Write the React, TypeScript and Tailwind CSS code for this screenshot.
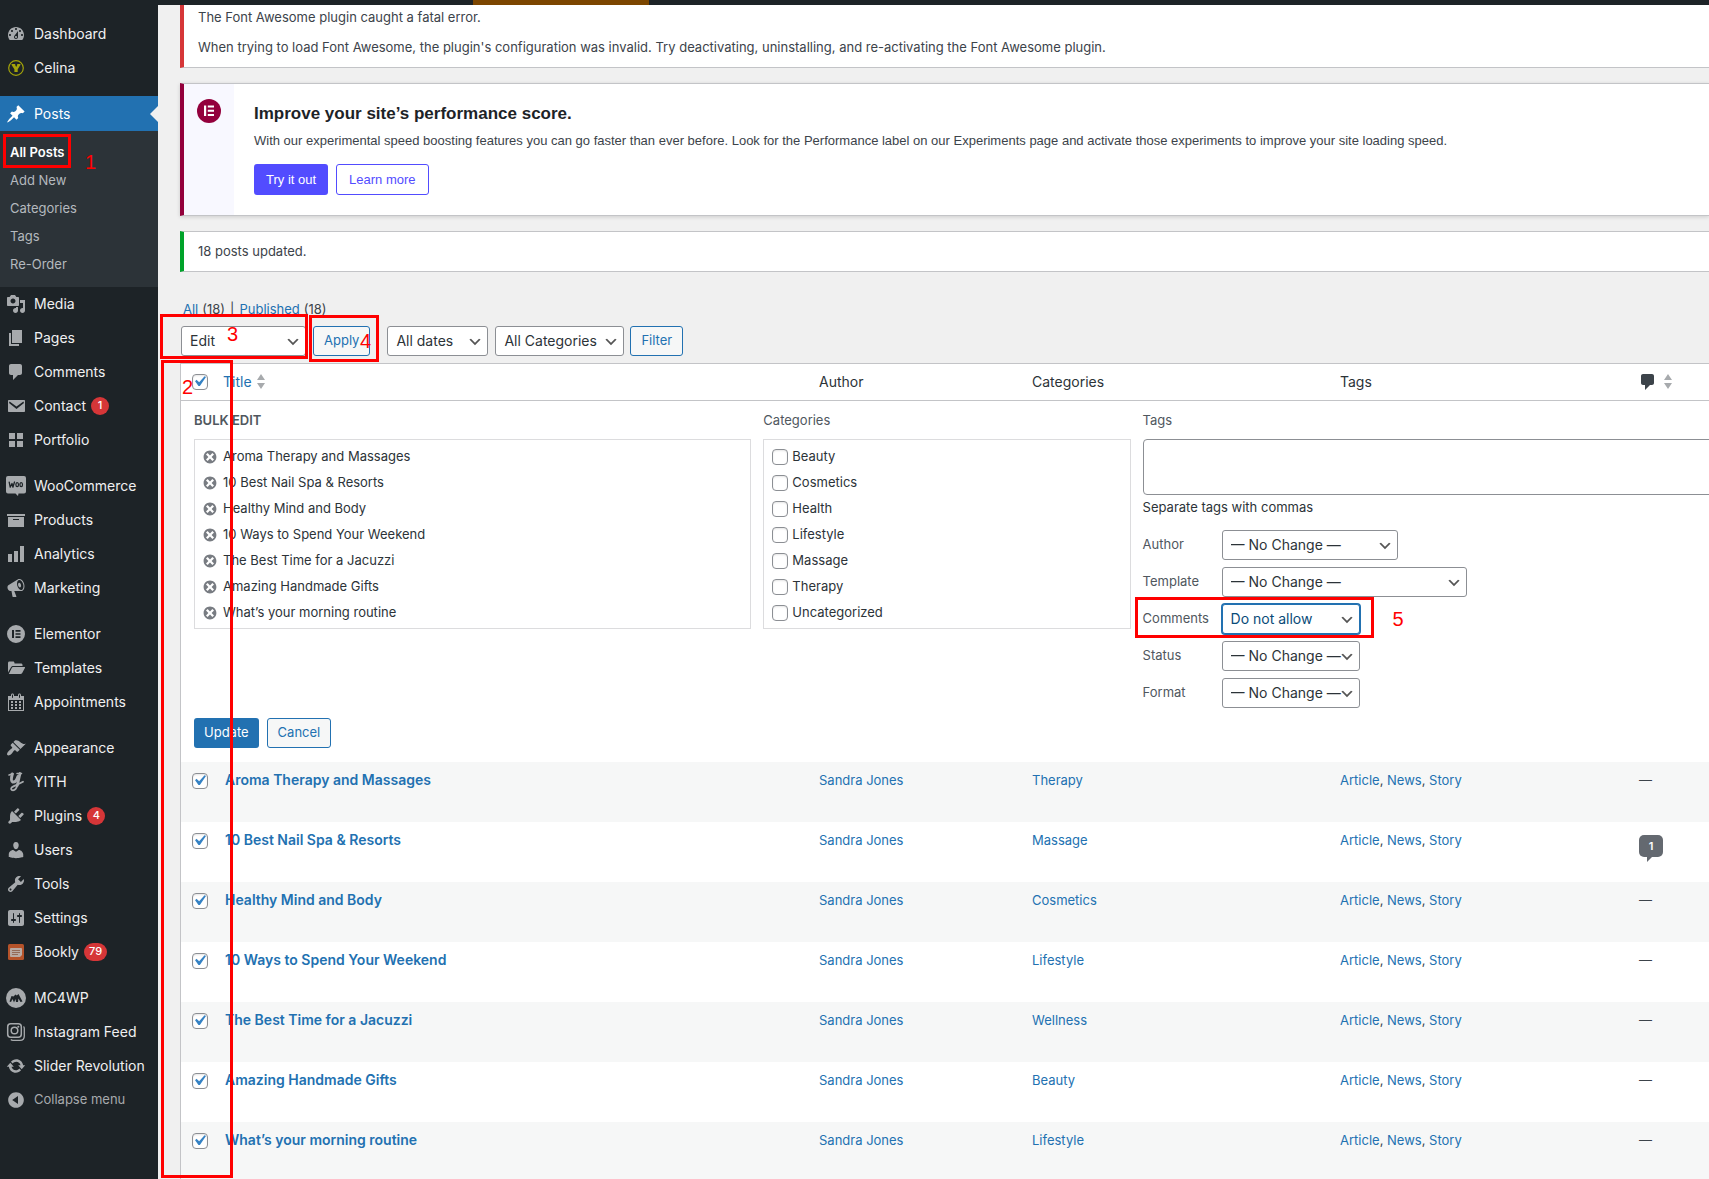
import React from "react";

const paths = {
  dashboard:
    "M3.76 16h12.48c1.1-1.37 1.76-3.11 1.76-5 0-4.42-3.58-8-8-8s-8 3.58-8 8c0 1.89.66 3.63 1.76 5zM10 4c.55 0 1 .45 1 1s-.45 1-1 1-1-.45-1-1 .45-1 1-1zM6 6c.55 0 1 .45 1 1s-.45 1-1 1-1-.45-1-1 .45-1 1-1zm8 0c.55 0 1 .45 1 1s-.45 1-1 1-1-.45-1-1 .45-1 1-1zm-5.37 5.55L12 7v6c0 1.1-.9 2-2 2s-2-.9-2-2c0-.57.24-1.08.63-1.45zM4 10c.55 0 1 .45 1 1s-.45 1-1 1-1-.45-1-1 .45-1 1-1zm12 0c.55 0 1 .45 1 1s-.45 1-1 1-1-.45-1-1 .45-1 1-1zm-5 3c0-.55-.45-1-1-1s-1 .45-1 1 .45 1 1 1 1-.45 1-1z",
  pin: "M10.44 3.02l1.82-1.82 6.36 6.35-1.83 1.82c-1.05-.68-2.48-.57-3.41.36l-.75.75c-.92.93-1.04 2.35-.35 3.41l-1.83 1.82-2.41-2.41-2.8 2.79c-.42.42-3.38 2.71-3.8 2.29s1.86-3.39 2.28-3.81l2.79-2.79L4.1 9.36l1.83-1.82c1.05.69 2.48.57 3.4-.36l.75-.75c.93-.92 1.05-2.35.36-3.41z",
  media:
    "M13 11V4c0-.55-.45-1-1-1h-1.67L9 1H5L3.67 3H2c-.55 0-1 .45-1 1v7c0 .55.45 1 1 1h10c.55 0 1-.45 1-1zM7 4.5c1.38 0 2.5 1.12 2.5 2.5S8.38 9.5 7 9.5 4.5 8.38 4.5 7 5.62 4.5 7 4.5zM14 6h5v10.5c0 1.38-1.12 2.5-2.5 2.5S14 17.88 14 16.5s1.12-2.5 2.5-2.5c.17 0 .34.02.5.05V9h-3V6zm-4 8.05V13h2v3.5c0 1.38-1.12 2.5-2.5 2.5S7 17.88 7 16.5 8.12 14 9.5 14c.17 0 .34.02.5.05z",
  pages: "M6 15V2h10v13H6zm-1 1h8v2H3V5h2v11z",
  comment:
    "M5 2h9c1.1 0 2 .9 2 2v7c0 1.1-.9 2-2 2h-2l-5 5v-5H5c-1.1 0-2-.9-2-2V4c0-1.1.9-2 2-2z",
  mail: "M3 4h15c.6 0 1 .4 1 1v10c0 .6-.4 1-1 1H3c-.6 0-1-.4-1-1V5c0-.6.4-1 1-1zm.6 1.6L3 7l7.5 6L18 7l-.6-1.4-6.9 4.9z",
  grid: "M3 3h6v6H3zM11 3h6v6h-6zM3 11h6v6H3zM11 11h6v6h-6z",
  archive: "M19 4v2H1V4h18zM2 7h16v10H2V7zm11 3V9H7v1h6z",
  chart: "M18 18V2h-4v16h4zm-6 0V7H8v11h4zm-6 0v-8H2v8h4z",
  megaphone:
    "M18.15 5.94c.46 1.62.38 3.22-.02 4.48-.42 1.28-1.26 2.18-2.3 2.48-.16.06-.26.06-.4.06-.06.02-.12.02-.18.02-.06.02-.14.02-.22.02h-6.8l2.22 5.5c.02.14-.06.26-.14.34-.08.1-.24.16-.34.16H6.95c-.1 0-.26-.06-.34-.16-.08-.08-.16-.2-.14-.34l-1-5.5H4.25l-.02-.02c-.5.06-1.08-.18-1.54-.62s-.88-1.08-1.06-1.88c-.24-.8-.2-1.56-.02-2.2.18-.62.58-1.08 1.06-1.3l.02-.02 9-5.4c.1-.06.18-.1.24-.16.06-.04.14-.08.24-.12.16-.08.28-.12.5-.18 1.04-.3 2.24.1 3.22.98s1.84 2.24 2.26 3.86zm-2.58 5.98h-.02c.4-.1.74-.34 1.04-.7.58-.7.86-1.76.86-3.04 0-.64-.1-1.3-.28-1.98-.34-1.36-1.02-2.5-1.78-3.24s-1.68-1.1-2.46-.88c-.82.22-1.4.96-1.7 2-.32 1.04-.28 2.36.06 3.72.38 1.36 1 2.5 1.8 3.24.78.74 1.62 1.1 2.48.88zm-2.54-7.08c.22-.04.42-.02.62.04.38.16.76.48 1.02 1s.42 1.2.42 1.78c0 .3-.04.56-.12.8-.18.48-.44.84-.86.94-.34.1-.8-.06-1.14-.4s-.64-.86-.78-1.5c-.18-.62-.12-1.24.02-1.72s.48-.84.82-.94z",
  elementor:
    "M10 1a9 9 0 1 1 0 18 9 9 0 0 1 0-18zM6 6v8h2V6zM9.500 6v1.700h5V6zM9.500 9.150v1.700h5v-1.700zM9.500 12.300V14h5v-1.700z",
  folder:
    "M2 14.500V5c0-.8.6-1.500 1.400-1.500h3.700c.8 0 1.400.7 1.400 1.500v.5h6.500c.8 0 1.500.6 1.500 1.400V8H7.200c-.9 0-1.700.5-2.200 1.200L2 14.500zM7 9h11.400c.5 0 .8.6.5 1l-2.700 5c-.4.600-1 1-1.700 1H2.800L6 9.600c.2-.4.600-.6 1-.6z",
  calendar:
    "M15 4h3v15H2V4h3V3c0-.41.15-.76.44-1.06.29-.29.65-.44 1.06-.44s.77.15 1.06.44c.29.3.44.65.44 1.06v1h4V3c0-.41.15-.76.44-1.06.29-.29.65-.44 1.06-.44s.77.15 1.06.44c.29.3.44.65.44 1.06v1zM6 3v2.5c0 .14.05.26.15.36.09.09.21.14.35.14s.26-.05.35-.14c.1-.1.15-.22.15-.36V3c0-.14-.05-.26-.15-.35-.09-.1-.21-.15-.35-.15s-.26.05-.35.15c-.1.09-.15.21-.15.35zm7 0v2.5c0 .14.05.26.14.36.1.09.22.14.36.14s.26-.05.36-.14c.09-.1.14-.22.14-.36V3c0-.14-.05-.26-.14-.35-.1-.1-.22-.15-.36-.15s-.26.05-.36.15c-.09.09-.14.21-.14.35zm4 15V8H3v10h14zM7 9v2H5V9h2zm2 0h2v2H9V9zm4 2V9h2v2h-2zm-6 1v2H5v-2h2zm2 0h2v2H9v-2zm4 2v-2h2v2h-2zm-6 1v2H5v-2h2zm4 2H9v-2h2v2zm4 0h-2v-2h2v2z",
  brush:
    "M14.48 11.06L7.41 3.99l1.5-1.5c.5-.56 2.3-.47 3.51.32 1.21.8 1.43 1.28 2.91 2.1 1.18.64 2.45 1.26 4.45.85zm-.71.71L6.7 4.7 4.93 6.47c-.39.39-.39 1.02 0 1.41l1.06 1.06c.39.39.39 1.03 0 1.42-.6.6-1.43 1.11-2.21 1.69-.35.26-.7.53-1.01.84C1.43 14.23.4 16.08 1.4 17.07c.99 1 2.84-.03 4.18-1.36.31-.31.58-.66.85-1.02.57-.78 1.08-1.61 1.69-2.21.39-.39 1.02-.39 1.41 0l1.06 1.06c.39.39 1.02.39 1.41 0z",
  plugin:
    "M13.11 4.36L9.87 7.6 8 5.73l3.24-3.24c.35-.34 1.05-.2 1.56.32.52.51.66 1.21.31 1.55zm-8 1.77l.91-1.12 9.01 9.01-1.19.84c-.71.71-2.63 1.16-3.82 1.16H6.14L4.9 17.26c-.59.59-1.54.59-2.12 0-.59-.58-.59-1.53 0-2.12l1.24-1.24v-3.88c0-1.13.4-3.19 1.09-3.89zm7.26 3.97l3.24-3.24c.34-.35 1.04-.21 1.55.31.52.51.66 1.21.31 1.55l-3.24 3.25z",
  user: "M10 9.25c-2.27 0-2.73-3.44-2.73-3.44C7 4.02 7.82 2 9.97 2c2.16 0 2.98 2.02 2.71 3.81 0 0-.41 3.44-2.68 3.44zm0 2.57L12.72 10c2.39 0 4.52 2.33 4.52 4.53v2.49s-3.65 1.13-7.24 1.13c-3.65 0-7.24-1.13-7.24-1.13v-2.49c0-2.25 1.94-4.48 4.47-4.48z",
  tools:
    "M16.68 9.77c-1.34 1.34-3.3 1.67-4.95.99l-5.41 6.52c-.99.99-2.59.99-3.58 0s-.99-2.59 0-3.57l6.52-5.42c-.68-1.65-.35-3.61.99-4.95 1.28-1.28 3.12-1.62 4.72-1.06l-2.89 2.89 2.82 2.82 2.86-2.87c.53 1.58.18 3.39-1.08 4.65zM3.81 16.21c.4.39 1.04.39 1.43 0 .4-.4.4-1.04 0-1.43-.39-.4-1.03-.4-1.43 0-.39.39-.39 1.03 0 1.43z",
  settings:
    "M18 16V4c0-1.1-.9-2-2-2H4c-1.1 0-2 .9-2 2v12c0 1.1.9 2 2 2h12c1.1 0 2-.9 2-2zM8 11h1c.55 0 1 .45 1 1s-.45 1-1 1H8v1.5c0 .28-.22.5-.5.5s-.5-.22-.5-.5V13H6c-.55 0-1-.45-1-1s.45-1 1-1h1V5.500c0-.28.22-.5.5-.5s.5.22.5.5V11zm5-2h-1c-.55 0-1-.45-1-1s.45-1 1-1h1V5.500c0-.28.22-.5.5-.5s.5.22.5.5V7h1c.55 0 1 .45 1 1s-.45 1-1 1h-1v5.500c0 .28-.22.5-.5.5s-.5-.22-.5-.5V9z",
  update:
    "M10.2 3.28c3.53 0 6.43 2.61 6.92 6h2.08l-3.5 4-3.500-4h2.320c-.45-1.970-2.210-3.450-4.320-3.450-1.450 0-2.730.71-3.540 1.780L4.950 5.660C6.230 4.200 8.110 3.280 10.200 3.280zm-.4 13.440c-3.520 0-6.430-2.610-6.920-6H.8l3.500-4c1.170 1.330 2.330 2.670 3.500 4H5.480c.45 1.970 2.210 3.450 4.320 3.450 1.450 0 2.730-.71 3.540-1.780l1.710 1.950c-1.280 1.460-3.150 2.380-5.250 2.380z",
  collapse:
    "M10 2.160c4.330 0 7.840 3.510 7.840 7.840s-3.510 7.840-7.840 7.840S2.160 14.330 2.160 10 5.710 2.160 10 2.160zm2 11.720V6.120L6.180 9.970z",
  dismiss:
    "M10 2c4.42 0 8 3.580 8 8s-3.580 8-8 8-8-3.580-8-8 3.580-8 8-8zm5 11l-3-3 3-3-2-2-3 3-3-3-2 2 3 3-3 3 2 2 3-3 3 3z",
  check:
    "M14.83 4.89l1.34.94-5.81 8.38H9.02L5.78 9.67l1.34-1.25 2.57 2.4z",
};

function Dash({ name, className = "size-5" }: { name: keyof typeof paths; className?: string }) {
  return (
    <svg viewBox="0 0 20 20" fill="currentColor" fillRule="evenodd" aria-hidden="true" className={className}>
      <path d={paths[name]} />
    </svg>
  );
}

const CelinaIcon = () => (
  <svg viewBox="0 0 20 20" className="size-5" aria-hidden="true">
    <circle cx="10" cy="10" r="7.300" fill="none" stroke="#a3a30a" strokeWidth="1.200" />
    <path d="M5.600 6h3.600v1l1 2 1-2V6h3.200v1l-2.700 4.200V14H8.400v-2.800L5.600 7z" fill="#a3a30a" />
  </svg>
);

const WooIcon = () => (
  <svg viewBox="0 0 20 20" className="size-5" aria-hidden="true">
    <path d="M2 0h16a2 2 0 0 1 2 2v13.500a2 2 0 0 1-2 2h-5.500l-.5 2.500-2.500-2.500H2a2 2 0 0 1-2-2V2a2 2 0 0 1 2-2z" fill="#a7aaad" />
    <path
      d="M3.200 6.200l1 5 1.800-3.700.9 3.700L8.500 6"
      fill="none"
      stroke="#1d2327"
      strokeWidth="1.300"
      strokeLinejoin="round"
      strokeLinecap="round"
    />
    <ellipse cx="11.200" cy="8.700" rx="1.300" ry="2" fill="none" stroke="#1d2327" strokeWidth="1.200" />
    <ellipse cx="15.200" cy="8.700" rx="1.300" ry="2" fill="none" stroke="#1d2327" strokeWidth="1.200" />
  </svg>
);

const YithIcon = () => (
  <svg viewBox="0 0 20 20" className="size-5" aria-hidden="true" fill="none" stroke="currentColor" strokeLinecap="round" strokeLinejoin="round">
    <path d="M3 3l4-1.300" strokeWidth="1.600" />
    <path d="M6.300 2c-.8 3-1.500 7.300.4 8 2.200.5 4.300-2.500 5.300-5.500" strokeWidth="3" />
    <path d="M14 1.500c-1 4-1.700 8-2.700 11.800" strokeWidth="2.800" />
    <path d="M11.300 13.300c-.8 3-2.300 5-4.300 5.100-2 0-2.500-1.800-1-3.200 2.500-2 7-3 11-5.500" strokeWidth="1.800" />
    <path d="M11 1.500h4.500" strokeWidth="1.500" />
  </svg>
);

const BooklyIcon = () => (
  <svg viewBox="0 0 20 20" className="size-5" aria-hidden="true">
    <rect x="2" y="2" width="16" height="16" rx="1.500" fill="#b5532a" />
    <path d="M5 6h10a1 1 0 0 1 1 1v6l-2 2H5a1 1 0 0 1-1-1V7a1 1 0 0 1 1-1z" fill="#b9aaa3" />
    <path d="M6 8.500h8M6 10.500h8M6 12.500h6" stroke="#8a5a45" strokeWidth=".8" />
  </svg>
);

const McIcon = () => (
  <svg viewBox="0 0 20 20" className="size-5" aria-hidden="true">
    <circle cx="10" cy="10" r="10" fill="#a7aaad" />
    <path d="M3.500 13.500l2-5.500 2 .5L9.500 6.500l1.300 1L12.500 6l4 7.500-2 .5-2-3.500-.5 3.500H10l-.5-3-1.500 3.500-1.500-3.500-1.500 3z" fill="#1d2327" />
  </svg>
);

const InstaIcon = () => (
  <svg viewBox="0 0 20 20" className="size-5" aria-hidden="true" fill="none" stroke="currentColor">
    <rect x="1.700" y="1.700" width="13.600" height="13.600" rx="3" strokeWidth="1.500" />
    <circle cx="8.500" cy="8.500" r="3.300" strokeWidth="1.500" />
    <circle cx="12.300" cy="4.700" r="1" fill="currentColor" stroke="none" />
    <path d="M17.500 4.500c.6.500.8 1.200.8 2V14c0 2.500-1.700 4.300-4.200 4.300H7c-1 0-1.700-.3-2.200-.8" strokeWidth="1.300" />
  </svg>
);

type Item = { label: string; icon: React.ReactNode; badge?: string };

const menuGroups: Item[][] = [
  [
    { label: "Media", icon: <Dash name="media" /> },
    { label: "Pages", icon: <Dash name="pages" /> },
    { label: "Comments", icon: <Dash name="comment" /> },
    { label: "Contact", icon: <Dash name="mail" />, badge: "1" },
    { label: "Portfolio", icon: <Dash name="grid" /> },
  ],
  [
    { label: "WooCommerce", icon: <WooIcon /> },
    { label: "Products", icon: <Dash name="archive" /> },
    { label: "Analytics", icon: <Dash name="chart" /> },
    { label: "Marketing", icon: <Dash name="megaphone" /> },
  ],
  [
    { label: "Elementor", icon: <Dash name="elementor" /> },
    { label: "Templates", icon: <Dash name="folder" /> },
    { label: "Appointments", icon: <Dash name="calendar" /> },
  ],
  [
    { label: "Appearance", icon: <Dash name="brush" /> },
    { label: "YITH", icon: <YithIcon /> },
    { label: "Plugins", icon: <Dash name="plugin" />, badge: "4" },
    { label: "Users", icon: <Dash name="user" /> },
    { label: "Tools", icon: <Dash name="tools" /> },
    { label: "Settings", icon: <Dash name="settings" /> },
    { label: "Bookly", icon: <BooklyIcon />, badge: "79" },
  ],
  [
    { label: "MC4WP", icon: <McIcon /> },
    { label: "Instagram Feed", icon: <InstaIcon /> },
    { label: "Slider Revolution", icon: <Dash name="update" /> },
  ],
];

function MenuItem({ label, icon, badge }: Item) {
  return (
    <a href="#" className="flex h-[34px] items-center gap-2 pl-1.5 text-sm whitespace-nowrap text-[#f0f0f1]">
      <span className="text-[#a7aaad]">{icon}</span>
      <span className="flex items-center gap-[5px]">
        {label}
        {badge && (
          <span className="flex h-[18px] min-w-[18px] items-center justify-center rounded-full bg-[#d63638] px-[5px] text-[11px] font-medium text-white">
            {badge}
          </span>
        )}
      </span>
    </a>
  );
}

function Mark({ className, children }: { className: string; children?: React.ReactNode }) {
  return (
    <span
      aria-hidden="true"
      className={`pointer-events-none absolute z-10 font-['Liberation_Sans',Arial,sans-serif] text-xl leading-5 font-normal text-[#ff0000] ${className}`}
    >
      {children}
    </span>
  );
}

const frame = "border-[3px] border-[#ff0000]";

function Sidebar() {
  return (
    <nav className="w-[158px] shrink-0 bg-[#1d2327] pt-3" aria-label="Main menu">
      <MenuItem label="Dashboard" icon={<Dash name="dashboard" />} />
      <MenuItem label="Celina" icon={<CelinaIcon />} />
      <a href="#" className="relative mt-[11px] flex h-[35px] items-center gap-2 bg-[#2271b1] pl-1.5 text-sm text-white">
        <Dash name="pin" />
        Posts
        <span className="absolute right-0 border-y-8 border-r-8 border-y-transparent border-r-[#f0f0f0]" />
      </a>
      <div className="relative flex flex-col bg-[#2c3338] pt-[7px] pb-[9px] text-[13px] leading-7 text-[#b4b9be]">
        <a href="#" className="pl-2.5 font-semibold text-white">
          All Posts
        </a>
        {["Add New", "Categories", "Tags", "Re-Order"].map((t) => (
          <a key={t} href="#" className="pl-2.5">
            {t}
          </a>
        ))}
        <Mark className={`top-[3px] left-[3px] h-[34px] w-[68px] ${frame}`} />
        <Mark className="top-[21px] left-[85px]">1</Mark>
      </div>
      {menuGroups.map((group, i) => (
        <div key={i} className={i ? "mt-3" : ""}>
          {group.map((item) => (
            <MenuItem key={item.label} {...item} />
          ))}
        </div>
      ))}
      <button type="button" className="flex h-[34px] items-center gap-2 pl-1.5 text-[13px] text-[#a7aaad]">
        <Dash name="collapse" />
        Collapse menu
      </button>
    </nav>
  );
}

function Select({ id, label, value, className, focused }: { id: string; label?: string; value: string; className: string; focused?: boolean }) {
  return (
    <span className={`relative block ${className}`}>
      <select
        id={id}
        aria-label={label}
        className={`block h-[30px] w-full appearance-none rounded-[3px] border bg-white pl-2 text-sm ${
          focused ? "border-[#2271b1] text-[#0a4b78] ring-1 ring-[#2271b1]" : "border-[#8c8f94] text-[#2c3338]"
        }`}
      >
        <option>{value}</option>
      </select>
      <svg viewBox="0 0 20 20" fill="#555" aria-hidden="true" className="pointer-events-none absolute top-2 right-[5px] size-4">
        <path d="M5 6l5 5 5-5 2 1-7 7-7-7 2-1z" />
      </svg>
    </span>
  );
}

function Checkbox({ id, label, checked }: { id: string; label?: string; checked?: boolean }) {
  return (
    <span className="relative block size-4 shrink-0">
      <input
        id={id}
        type="checkbox"
        defaultChecked={checked}
        aria-label={label}
        className="peer block size-4 appearance-none rounded-[4px] border border-[#8c8f94] bg-white shadow-[inset_0_1px_2px_rgba(0,0,0,0.1)]"
      />
      <span className="pointer-events-none absolute -top-[3px] -left-[3px] hidden text-[#3582c4] peer-checked:block">
        <Dash name="check" className="size-[21px]" />
      </span>
    </span>
  );
}

function Sorter() {
  return (
    <svg viewBox="0 0 8 15" fill="#a7aaad" aria-hidden="true" className="h-[15px] w-2">
      <path d="M0 6l4-6 4 6zM0 9h8l-4 6z" />
    </svg>
  );
}

const outlineButton = "h-[30px] rounded-[3px] border border-[#2271b1] bg-[#f6f7f7] px-2.5 text-[13px] text-[#2271b1]";

function Notices() {
  return (
    <>
      <div className="border-b border-l-4 border-[#c3c4c7] border-l-[#d63638] bg-white pt-[2px] pb-2.5 pl-3.5 leading-5">
        <p>The Font Awesome plugin caught a fatal error.</p>
        <p className="mt-2.5">
          When trying to load Font Awesome, the plugin's configuration was invalid. Try deactivating, uninstalling, and
          re-activating the Font Awesome plugin.
        </p>
      </div>
      <section className="mt-[15px] flex border-y border-l-4 border-[#c3c4c7] border-l-[#93003c] bg-white font-['Liberation_Sans',Arial,sans-serif] shadow-[0_1px_4px_rgba(0,0,0,0.15)]">
        <div className="flex w-[50px] shrink-0 justify-center bg-[#f8f8ff] pt-[15px]">
          <svg viewBox="0 0 24 24" className="size-6" aria-hidden="true">
            <circle cx="12" cy="12" r="12" fill="#93003c" />
            <path d="M7 6.500h2.200v10.500H7zM10.800 6.500H17v2h-6.200zM10.800 10.700H17v2h-6.200zM10.800 15H17v2h-6.200z" fill="#fff" />
          </svg>
        </div>
        <div className="min-w-0 py-5 pl-5">
          <h2 className="text-[17px] leading-5 font-bold text-[#1d2327]">Improve your site’s performance score.</h2>
          <p className="mt-[7px] leading-5">
            With our experimental speed boosting features you can go faster than ever before. Look for the Performance
            label on our Experiments page and activate those experiments to improve your site loading speed.
          </p>
          <div className="mt-[13px] flex gap-2">
            <button type="button" className="h-[31px] rounded-[3px] bg-[#524cff] px-3 text-white">
              Try it out
            </button>
            <button type="button" className="h-[31px] rounded-[3px] border border-[#524cff] px-3 text-[#524cff]">
              Learn more
            </button>
          </div>
        </div>
      </section>
      <div className="mt-[15px] border-y border-l-4 border-[#c3c4c7] border-l-[#00a32a] bg-white py-[9px] pl-3.5 leading-[21px]">
        <p>18 posts updated.</p>
      </div>
    </>
  );
}

const posts = [
  { title: "Aroma Therapy and Massages", category: "Therapy" },
  { title: "10 Best Nail Spa & Resorts", category: "Massage", comments: 1 },
  { title: "Healthy Mind and Body", category: "Cosmetics" },
  { title: "10 Ways to Spend Your Weekend", category: "Lifestyle" },
  { title: "The Best Time for a Jacuzzi", category: "Wellness" },
  { title: "Amazing Handmade Gifts", category: "Beauty" },
  { title: "What’s your morning routine", category: "Lifestyle" },
];

const categories = ["Beauty", "Cosmetics", "Health", "Lifestyle", "Massage", "Therapy", "Uncategorized"];

const bulkFields = [
  { label: "Author", value: "— No Change —", width: "w-[176px]" },
  { label: "Template", value: "— No Change —", width: "w-[245px]" },
  { label: "Comments", value: "Do not allow", width: "w-[138px]" },
  { label: "Status", value: "— No Change —", width: "w-[138px]" },
  { label: "Format", value: "— No Change —", width: "w-[138px]" },
];

function BulkEdit() {
  return (
    <form className="pt-[9px] pb-3.5 pl-[13px] text-[#2c3338]" onSubmit={(e) => e.preventDefault()}>
      <div className="grid grid-cols-[557fr_367fr_566fr] gap-x-3">
        <div>
          <h3 className="leading-5 font-semibold text-[#50575e]">BULK EDIT</h3>
          <ul className="mt-[9px] border border-[#dcdcde] pt-1 pb-0.5">
            {posts.map((p) => (
              <li key={p.title} className="flex h-[26px] items-center gap-[5px] pl-[7px]">
                <button type="button" aria-label={`Remove ${p.title} from bulk edit`} className="text-[#787c82]">
                  <Dash name="dismiss" className="size-4" />
                </button>
                {p.title}
              </li>
            ))}
          </ul>
        </div>
        <fieldset>
          <legend className="leading-5 text-[#50575e]">Categories</legend>
          <ul className="mt-[9px] border border-[#dcdcde] pt-1 pb-0.5">
            {categories.map((c) => (
              <li key={c} className="flex h-[26px] items-center gap-1 pl-2">
                <Checkbox id={`cat-${c}`} />
                <label htmlFor={`cat-${c}`}>{c}</label>
              </li>
            ))}
          </ul>
        </fieldset>
        <div>
          <label htmlFor="bulk-tags" className="block leading-5 text-[#50575e]">
            Tags
          </label>
          <textarea
            id="bulk-tags"
            className="mt-[9px] block h-14 w-[calc(100%+16px)] resize-none rounded-[4px] border border-[#8c8f94] bg-white"
          />
          <p className="mt-0.5 leading-5">Separate tags with commas</p>
          <div className="mt-[13px] flex flex-col gap-[7px]">
            {bulkFields.map((f) => (
              <div key={f.label} className="relative flex items-center">
                <label htmlFor={`bulk-${f.label}`} className="w-[79px] text-[#50575e]">
                  {f.label}
                </label>
                <Select id={`bulk-${f.label}`} value={f.value} className={f.width} focused={f.label === "Comments"} />
                {f.label === "Comments" && (
                  <>
                    <Mark className={`-top-[7px] -left-2 h-[41px] w-[239px] ${frame}`} />
                    <Mark className="top-[5px] left-[250px]">5</Mark>
                  </>
                )}
              </div>
            ))}
          </div>
        </div>
      </div>
      <div className="mt-2.5 flex gap-2">
        <button type="submit" className="h-[30px] rounded-[3px] bg-[#2271b1] px-2.5 text-white">
          Update
        </button>
        <button type="button" className={outlineButton}>
          Cancel
        </button>
      </div>
    </form>
  );
}

function PostsTable() {
  return (
    <table className="w-full table-fixed border-collapse text-left">
      <colgroup>
        <col className="w-[34px]" />
        <col />
        <col className="w-[213px]" />
        <col className="w-[308px]" />
        <col className="w-[299px]" />
        <col className="w-[78px]" />
      </colgroup>
      <thead className="text-sm text-[#2c3338]">
        <tr className="h-9 border-b border-[#c3c4c7] *:font-normal">
          <th scope="col" className="pl-[11px]">
            <Checkbox id="select-all" label="Select all" checked />
          </th>
          <th scope="col" className="pl-2">
            <a href="#" className="flex items-center gap-[5px] text-[#2271b1]">
              Title <Sorter />
            </a>
          </th>
          <th scope="col" className="pl-2">
            Author
          </th>
          <th scope="col" className="pl-2">
            Categories
          </th>
          <th scope="col" className="pl-2">
            Tags
          </th>
          <th scope="col" className="pl-[7px]">
            <a href="#" aria-label="Comments" className="flex items-center gap-1.5 text-[#3c434a]">
              <Dash name="comment" />
              <Sorter />
            </a>
          </th>
        </tr>
      </thead>
      <tbody>
        <tr>
          <td colSpan={6}>
            <BulkEdit />
          </td>
        </tr>
        {posts.map((p, i) => (
          <tr key={p.title} className="h-[60px] align-top leading-5 even:bg-[#f6f7f7]">
            <td className="pt-[11px] pl-[11px]">
              <Checkbox id={`post-${i}`} label={`Select ${p.title}`} checked />
            </td>
            <td className="pt-2 pl-2.5 text-sm leading-5">
              <a href="#" className="font-semibold text-[#2271b1]">
                {p.title}
              </a>
            </td>
            <td className="pt-2 pl-2">
              <a href="#" className="text-[#2271b1]">
                Sandra Jones
              </a>
            </td>
            <td className="pt-2 pl-2">
              <a href="#" className="text-[#2271b1]">
                {p.category}
              </a>
            </td>
            <td className="pt-2 pl-2">
              {["Article", "News", "Story"].map((t, n) => (
                <React.Fragment key={t}>
                  {n > 0 && ", "}
                  <a href="#" className="text-[#2271b1]">
                    {t}
                  </a>
                </React.Fragment>
              ))}
            </td>
            <td className="pt-2 pl-2">
              {p.comments ? (
                <a href="#" className="mt-[5px] block w-6 text-white" aria-label="1 comment">
                  <span className="flex h-[22px] items-center justify-center rounded-[5px] bg-[#646970] text-[11px] font-semibold">
                    {p.comments}
                  </span>
                  <span className="ml-2 block w-0 border-t-[5px] border-r-[5px] border-t-[#646970] border-r-transparent" />
                </a>
              ) : (
                "—"
              )}
            </td>
          </tr>
        ))}
      </tbody>
    </table>
  );
}

export default function App() {
  return (
    <div className="flex h-screen flex-col overflow-hidden bg-[#f0f0f0] font-[Inter,sans-serif] text-[13px] text-[#3c434a]">
      <header className="h-[5px] shrink-0 bg-[#1d2327]">
        <div className="ml-[473px] h-full w-[176px] bg-[#7c4600]" />
      </header>
      <div className="flex min-h-0 flex-1">
        <Sidebar />
        <main className="min-w-0 flex-1 pl-[22px]">
          <Notices />
          <p className="mt-[27px] flex gap-1 pl-[3px] leading-5">
            <a href="#" className="text-[#2271b1]">
              All
            </a>
            (18) <span className="px-px">|</span>
            <a href="#" className="text-[#2271b1]">
              Published
            </a>
            (18)
          </p>
          <div className="relative mt-[7px] flex pl-px">
            <Select id="bulk-action" label="Bulk action" value="Edit" className="w-[125px]" />
            <button type="button" className={`ml-[7px] ${outlineButton}`}>
              Apply
            </button>
            <Select id="dates" label="Filter by date" value="All dates" className="ml-[17px] w-[101px]" />
            <Select id="cats" label="Filter by category" value="All Categories" className="ml-[7px] w-[129px]" />
            <button type="button" className={`ml-1.5 ${outlineButton}`}>
              Filter
            </button>
            <Mark className={`-top-[12px] -left-[20px] h-[45px] w-[148px] ${frame}`} />
            <Mark className="-top-[2px] left-[47px]">3</Mark>
            <Mark className={`-top-[11px] left-[129px] h-[47px] w-[70px] ${frame}`} />
            <Mark className="top-[5px] left-[180px]">4</Mark>
          </div>
          <div className="relative mt-[7px] border-t border-l border-[#c3c4c7] bg-white">
            <PostsTable />
            <Mark className={`-top-[4px] -left-[20px] h-[818px] w-[72px] ${frame}`} />
            <Mark className="top-[13px] left-px">2</Mark>
          </div>
        </main>
      </div>
    </div>
  );
}
